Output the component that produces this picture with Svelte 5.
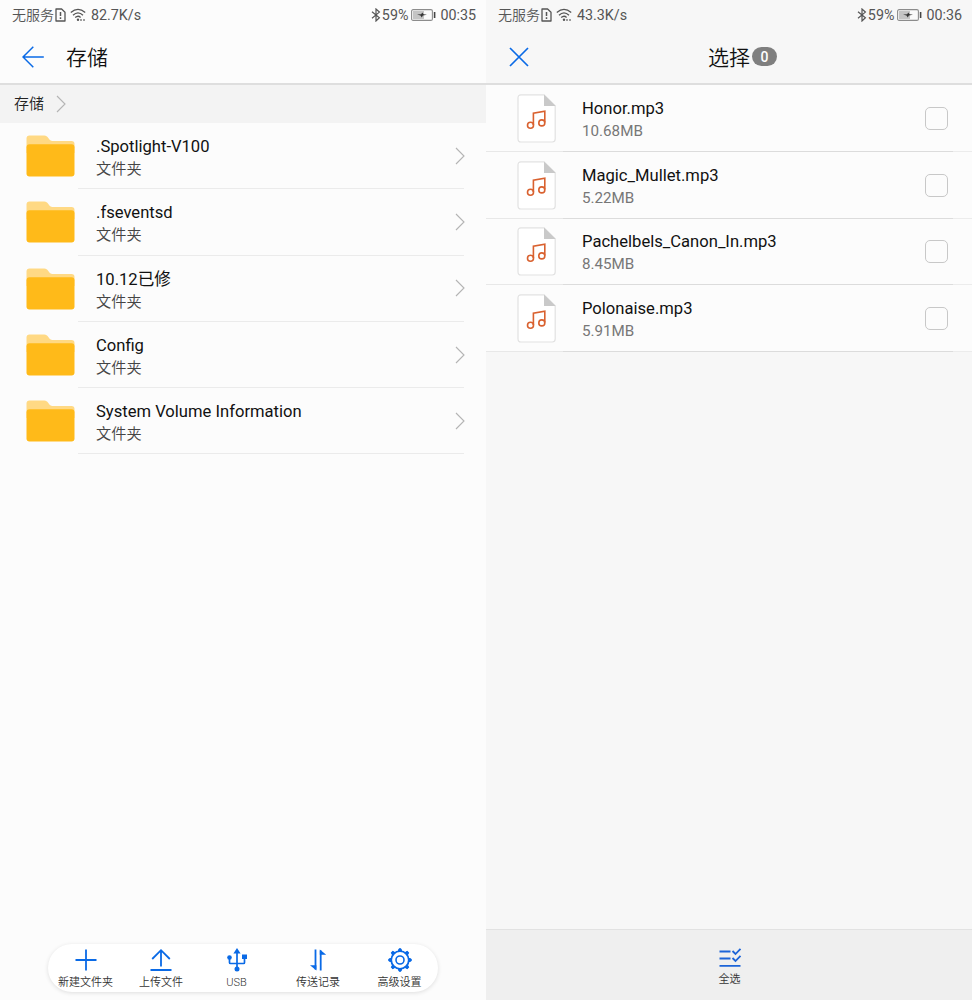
<script lang="ts">
  const folders = ['.Spotlight-V100', '.fseventsd', '10.12已修', 'Config', 'System Volume Information'];

  let songs = $state([
    { name: 'Honor.mp3', size: '10.68MB', checked: false },
    { name: 'Magic_Mullet.mp3', size: '5.22MB', checked: false },
    { name: 'Pachelbels_Canon_In.mp3', size: '8.45MB', checked: false },
    { name: 'Polonaise.mp3', size: '5.91MB', checked: false },
  ]);

  let selected = $derived(songs.filter((song) => song.checked).length);

  function selectAll() {
    const next = selected !== songs.length;
    songs.forEach((song) => (song.checked = next));
  }

  const gearTeeth = [0, 45, 90, 135, 180, 225, 270, 315];
</script>

{#snippet statusBar(speed: string, time: string)}
  <div class="status">
    <span class="carrier">无服务</span>
    <svg class="sim" width="11" height="14" viewBox="0 0 11 14">
      <path d="M1 1h5.6L10 4.2V13H1z" fill="none" stroke="#555" stroke-width="1.3" stroke-linejoin="round" />
      <path d="M5.5 4v4M5.5 9.3v1.6" stroke="#555" stroke-width="1.5" />
    </svg>
    <svg class="wifi" width="16" height="14" viewBox="0 0 16 14">
      <g fill="none" stroke="#555" stroke-width="1.3">
        <path d="M.8 4.6Q8-1.8 15.2 4.6" />
        <path d="M3 7.2Q8 2.6 13 7.2" />
        <path d="M5.2 9.6Q8 7 10.6 9.4" />
      </g>
      <circle cx="8" cy="11.8" r="1.2" fill="#555" />
      <path d="M11 12.9v-1.8M14 11.1v1.8" stroke="#777" stroke-width="1.4" />
    </svg>
    <span class="speed">{speed}</span>
    <svg class="bluetooth" width="10" height="14" viewBox="0 0 10 14">
      <path d="M1 3.8l7.4 6L5 13V1l3.4 3.1L1 10.2" fill="none" stroke="#555" stroke-width="1.2" />
    </svg>
    <span>59%</span>
    <svg class="battery" width="25" height="12" viewBox="0 0 25 12">
      <rect x=".6" y=".6" width="20.8" height="10.8" rx="1.5" fill="#fafafa" stroke="#8c8c8c" stroke-width="1.1" />
      <rect x="2" y="2" width="11" height="8" fill="#c4c4c4" />
      <path d="M6 5.6l4.2-.4 1-1.8 1.3 1.8 3.5.5-4.2.9-1 1.8-1.3-1.8z" fill="#333" />
      <path d="M23.6 3v6" stroke="#444" stroke-width="1.6" />
    </svg>
    <span>{time}</span>
  </div>
{/snippet}

{#snippet chevron()}
  <svg class="chevron" width="10" height="18" viewBox="0 0 10 18">
    <path d="M1 1l8 8-8 8" fill="none" stroke="#b4b4b4" stroke-width="1.1" />
  </svg>
{/snippet}

<div class="screens">
  <section class="screen browser">
    {@render statusBar('82.7K/s', '00:35')}
    <header class="titlebar">
      <svg class="back" width="22" height="22" viewBox="0 0 22 22">
        <path d="M11.3.8L1 11l10.3 10.2M1 11h20.8" fill="none" stroke="#0a6ae6" stroke-width="1.5" />
      </svg>
      <h1>存储</h1>
    </header>

    <nav class="crumbs">
      <span>存储</span>
      {@render chevron()}
    </nav>

    <ul class="folders">
      {#each folders as folder}
        <li>
          <svg class="folder" width="49" height="42" viewBox="0 0 49 42">
            <path d="M.5 3.6Q.5.6 3.5.6h14.7c2 0 3 .8 4.3 2.6 1.3 1.9 2 2.7 4 2.7h19q3 0 3 3v9H.5z" fill="#ffd984" />
            <path d="M.5 12.2q0-3 3-3h42q3 0 3 3v26.3q0 3-3 3h-42q-3 0-3-3z" fill="#ffba19" />
          </svg>
          <div class="entry">
            <div class="text">
              <strong>{folder}</strong>
              <small>文件夹</small>
            </div>
            {@render chevron()}
          </div>
        </li>
      {/each}
    </ul>

    <footer class="dock">
      <button class="new-folder">
        <svg width="24" height="24" viewBox="0 0 24 24">
          <path d="M12 1.5v21M1.5 12h21" stroke="#0a6ae6" stroke-width="1.8" />
        </svg>
        <span>新建文件夹</span>
      </button>
      <button class="upload">
        <svg width="24" height="24" viewBox="0 0 24 24">
          <path d="M12 18.5V2.2M3.2 11L12 2.2l8.8 8.8M1.5 22h21" fill="none" stroke="#0a6ae6" stroke-width="1.8" />
        </svg>
        <span>上传文件</span>
      </button>
      <button class="usb">
        <svg width="24" height="24" viewBox="0 0 24 24">
          <path d="M12 4v16M4.5 9.5v5q0 1 1 1h13q1 0 1-1V9" fill="none" stroke="#0a6ae6" stroke-width="1.7" />
          <path d="M12 0l3.6 5.5H8.4zM17 6.5h5V11h-5z" fill="#0a6ae6" />
          <circle cx="4.5" cy="9.5" r="2.3" fill="#0a6ae6" />
          <circle cx="12" cy="21" r="2.5" fill="#0a6ae6" />
        </svg>
        <span>USB</span>
      </button>
      <button class="transfers">
        <svg width="24" height="24" viewBox="0 0 24 24">
          <path d="M9.5 1.5v20M14.7 22.5v-20" stroke="#0a6ae6" stroke-width="1.8" />
          <path d="M10.4 22.5L4 17.2h6.4zM13.8 1.5l6.4 5.3h-6.4z" fill="#0a6ae6" />
        </svg>
        <span>传送记录</span>
      </button>
      <button class="settings">
        <svg width="24" height="24" viewBox="0 0 24 24">
          {#each gearTeeth as angle}
            <path d="M10.3 3.2L11 .8h2l.7 2.4z" fill="#0a6ae6" stroke="#0a6ae6" transform="rotate({angle} 12 12)" />
          {/each}
          <circle cx="12" cy="12" r="8.8" fill="none" stroke="#0a6ae6" stroke-width="1.8" />
          <circle cx="12" cy="12" r="4" fill="none" stroke="#0a6ae6" stroke-width="1.6" />
        </svg>
        <span>高级设置</span>
      </button>
    </footer>
  </section>

  <section class="screen picker">
    {@render statusBar('43.3K/s', '00:36')}
    <header class="titlebar">
      <svg class="close" width="20" height="20" viewBox="0 0 20 20">
        <path d="M1 1l18 18M19 1L1 19" stroke="#0a6ae6" stroke-width="1.7" />
      </svg>
      <h1>选择<span class="count">{selected}</span></h1>
    </header>

    <ul class="songs">
      {#each songs as song}
        <li>
          <svg class="file" width="39" height="49" viewBox="0 0 39 49">
            <path d="M4 .8h23L38.2 12v33q0 3-3 3H4q-3 0-3-3V3.8q0-3 3-3z" fill="#fff" stroke="#e2e2e2" stroke-width="1.2" />
            <path d="M27 .5L38.7 12H27z" fill="#c9c9c9" />
            <g fill="none" stroke="#d9612f" stroke-width="1.6">
              <path d="M16.4 31V19.2l11.4-1.9V28.5" />
              <circle cx="13.5" cy="31.2" r="3" />
              <circle cx="24.8" cy="28.9" r="3" />
            </g>
          </svg>
          <div class="text">
            <strong>{song.name}</strong>
            <small>{song.size}</small>
          </div>
          <input type="checkbox" bind:checked={song.checked} aria-label={song.name} />
        </li>
      {/each}
    </ul>

    <footer class="actions">
      <button onclick={selectAll}>
        <svg width="24" height="22" viewBox="0 0 24 22">
          <path d="M1.5 4.5h11M1.5 11.5h11M1.5 18.8h21M14.5 4l3 3L22.5 1.8M14.5 11l3 3 5-5.2" fill="none" stroke="#1c64d8" stroke-width="1.8" />
        </svg>
        <span>全选</span>
      </button>
    </footer>
  </section>
</div>

<style>
  :global(body) { background: #fcfcfc; }
  .screens {
    display: grid;
    grid-template-columns: 486px 486px;
    height: 1000px;
    color: #111;
    font-family: Roboto, 'Noto Sans CJK SC', sans-serif;
  }
  .screen { display: flex; flex-direction: column; background: #fcfcfc; overflow: hidden; }
  .picker { background: #f7f7f7; }
  ul { list-style: none; margin: 0; padding: 0; }
  svg { display: block; flex: none; }

  .status {
    display: flex;
    align-items: center;
    height: 30px;
    box-sizing: border-box;
    padding: 0 10px 0 12px;
    color: #555;
    font-size: 14.3px;
    line-height: 30px;
  }
  .carrier { font-size: 14px; font-weight: 350; }
  .sim { margin-left: 1px; }
  .wifi { margin: 0 5px 0 4px; }
  .bluetooth { margin: 0 1px 0 auto; }
  .battery { margin: 0 4px 0 3px; }

  .titlebar {
    display: flex;
    align-items: center;
    height: 55px;
    box-sizing: border-box;
    border-bottom: 2px solid #dedede;
    padding: 0 22px;
  }
  h1 { margin: 0; padding-top: 2px; font-size: 21px; font-weight: 350; line-height: 30px; }
  .browser h1 { margin-left: 22px; }
  .picker h1 { flex: 1; display: flex; align-items: center; justify-content: center; margin-left: 6px; }
  .count {
    width: 25px;
    height: 19px;
    margin: -3px 0 0 2px;
    border-radius: 10px;
    background: #7f7f7f;
    color: #fff;
    font-size: 14px;
    font-weight: 500;
    line-height: 20px;
    text-align: center;
  }

  .crumbs {
    display: flex;
    align-items: center;
    gap: 12px;
    height: 38px;
    padding-left: 14px;
    background: #f3f3f3;
    color: #222;
    font-size: 15px;
    font-weight: 350;
    line-height: 38px;
  }

  .text { display: flex; flex-direction: column; padding-top: 3px; }
  strong { font-size: 16.6px; font-weight: 400; line-height: 22px; }
  small { font-size: 15.2px; line-height: 22px; }

  .folders li { display: flex; align-items: center; height: 66.3px; padding: 0 22px 0 26px; }
  .folders .text { padding-top: 5px; }
  .folders small { color: #444; font-weight: 350; }
  .folder { margin-right: 3px; }
  .entry {
    flex: 1;
    display: flex;
    align-items: center;
    justify-content: space-between;
    height: 100%;
    box-sizing: border-box;
    padding-left: 18px;
    border-bottom: 1px solid #ebebeb;
  }
  .folders .chevron { margin-right: -1px; }

  .dock {
    display: grid;
    grid-template-columns: 75px 76px 75px 88px 75px;
    align-items: start;
    width: 390px;
    height: 48px;
    box-sizing: border-box;
    margin: auto auto 8px 48px;
    padding-top: 4px;
    border-radius: 24px;
    background: #fff;
    box-shadow: 0 1px 4px rgba(0, 0, 0, .12);
  }
  button {
    display: flex;
    flex-direction: column;
    align-items: center;
    gap: 2px;
    padding: 0;
    border: 0;
    background: none;
    color: #333;
    font: inherit;
    font-size: 11px;
    line-height: 18px;
    white-space: nowrap;
    cursor: pointer;
  }
  button span { font-weight: 350; }

  .picker .titlebar { padding-left: 23px; }
  .songs li {
    display: flex;
    align-items: center;
    height: 66.75px;
    box-sizing: border-box;
    padding: 1px 24px 0 31px;
    border-bottom: 1px solid;
    border-image: linear-gradient(90deg, #e8e8e8 78px, #dcdcdc 78px, #dcdcdc 466px, #ececec 466px) 1;
    background: #fcfcfc;
  }
  .songs .text { flex: 1; margin-left: 26px; }
  .songs small { color: #777; }
  input {
    appearance: none;
    width: 23px;
    height: 23px;
    margin: 0;
    border: 1.5px solid #c8c8c8;
    border-radius: 5px;
    background: #fcfcfc;
  }
  input:checked { border-color: #0a6ae6; background: #0a6ae6; }

  .actions {
    display: flex;
    align-items: flex-start;
    justify-content: center;
    height: 71px;
    box-sizing: border-box;
    margin-top: auto;
    padding: 17px 0 0 1px;
    border-top: 1px solid #e2e2e2;
    background: #efefef;
  }
</style>
